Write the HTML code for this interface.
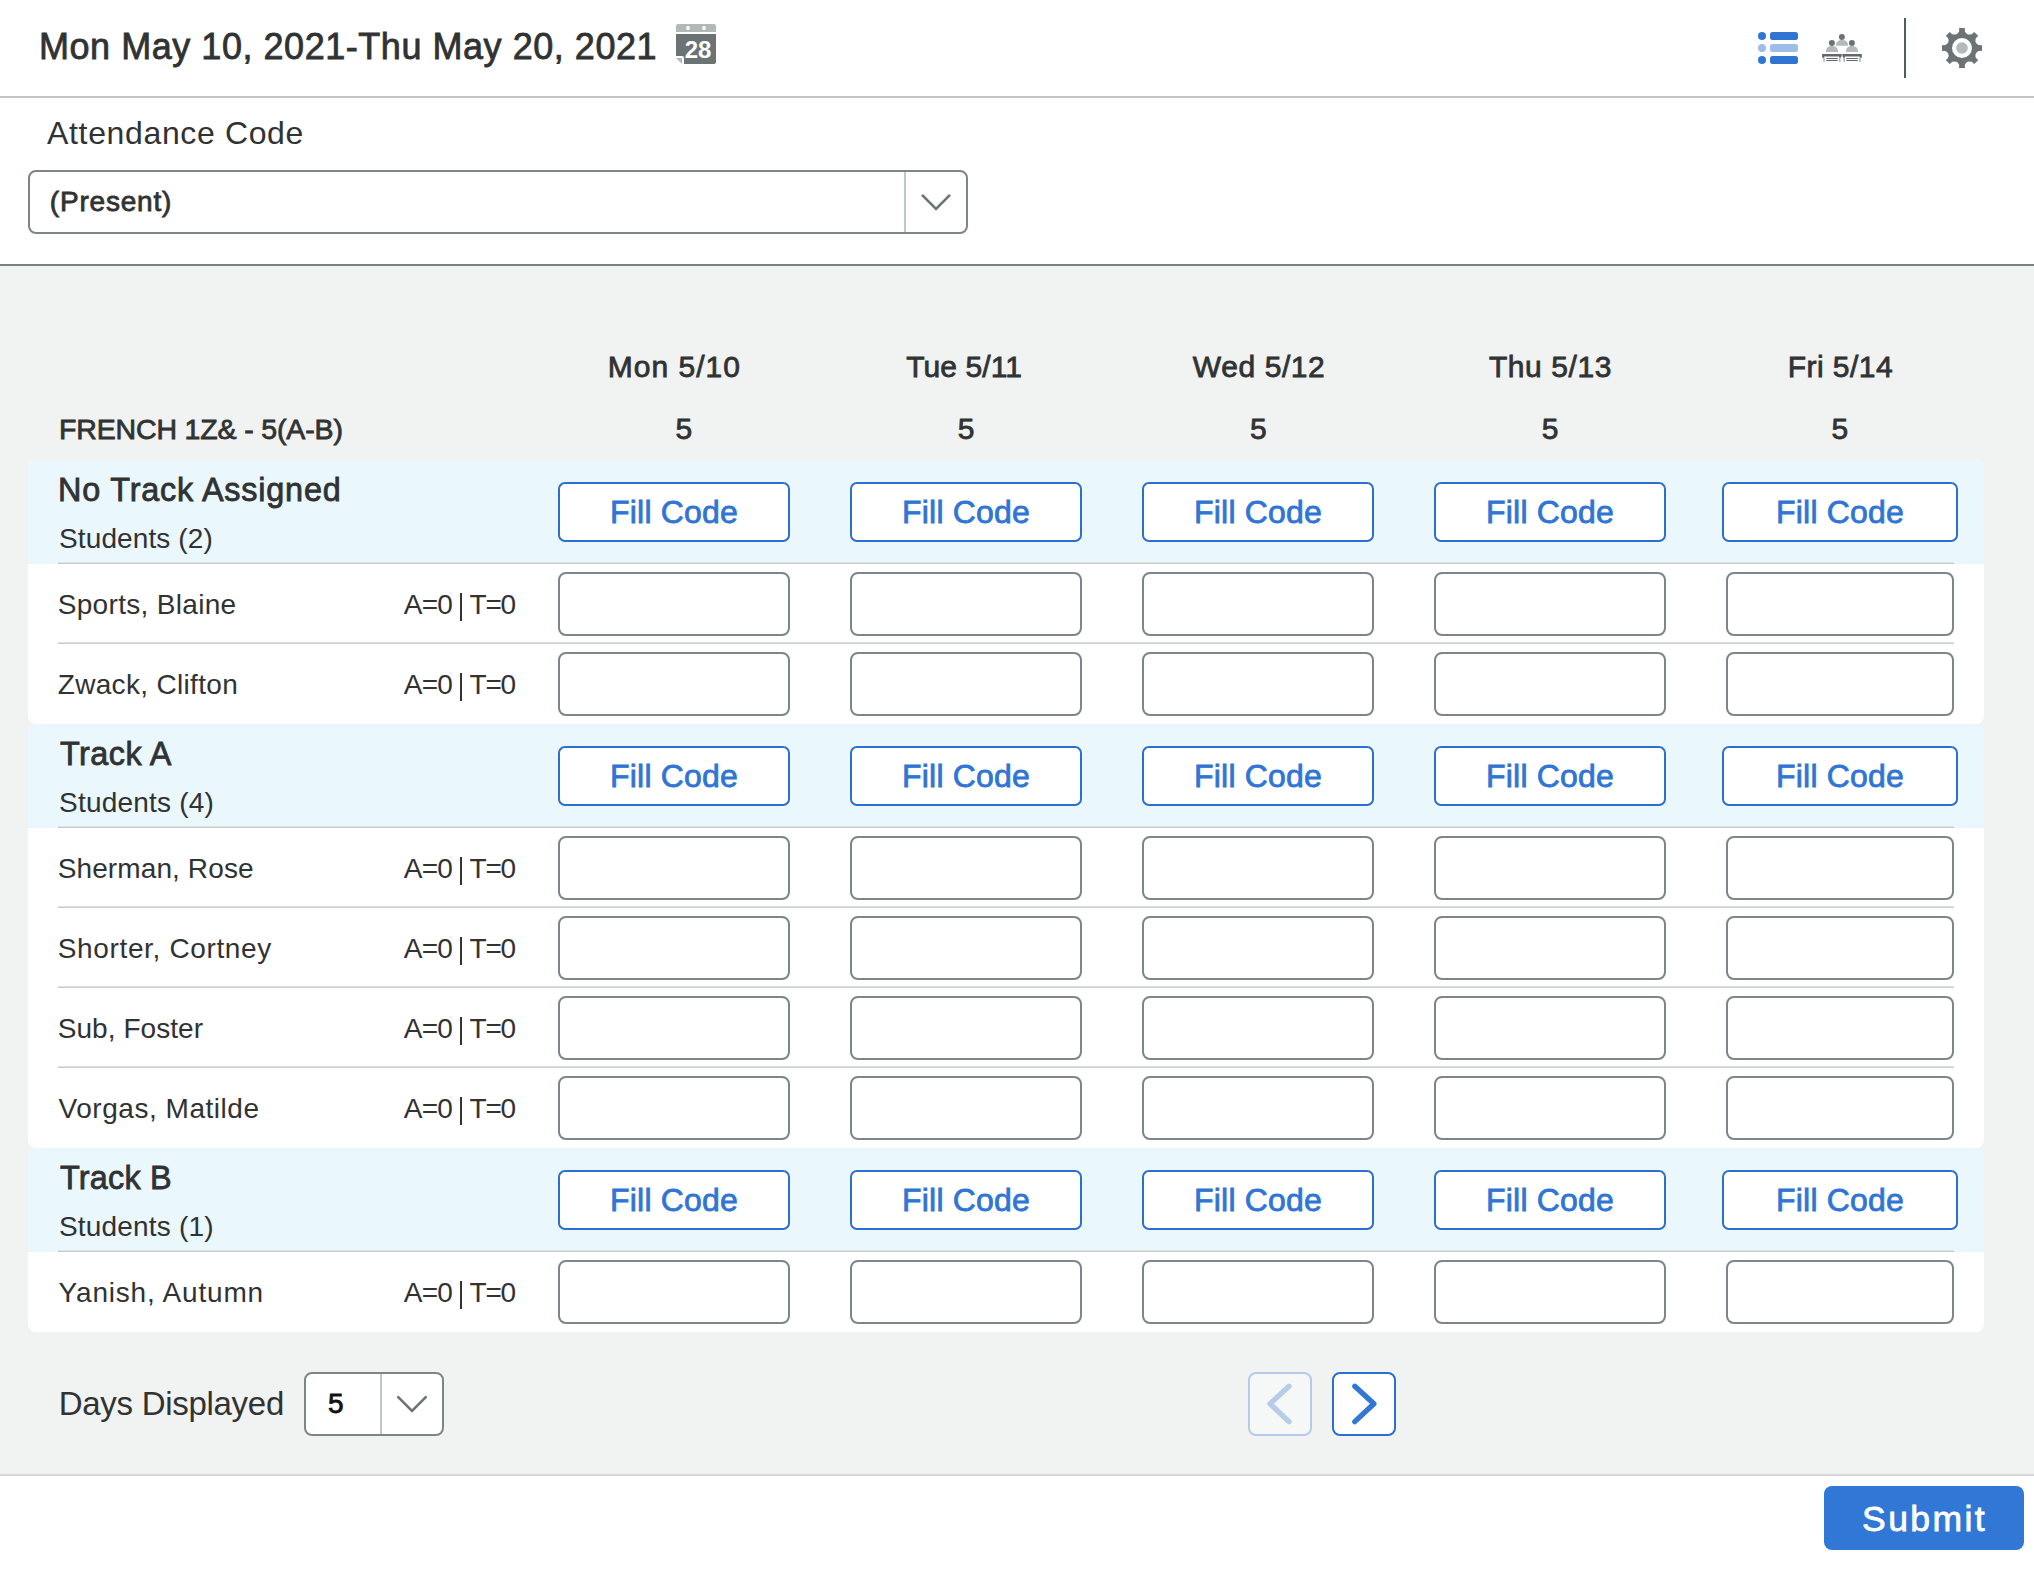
<!DOCTYPE html>
<html><head><meta charset="utf-8"><title>Attendance</title>
<style>
html,body{margin:0;padding:0;width:2034px;height:1570px;overflow:hidden;background:#fff;position:relative;font-family:"Liberation Sans", sans-serif;}
.t{position:absolute;white-space:pre;line-height:1;font-family:"Liberation Sans", sans-serif;}
</style></head><body>
<div style="position:absolute;left:0px;top:96px;width:2034px;height:2px;background:#c3c7c8"></div>
<div style="position:absolute;left:0px;top:264px;width:2034px;height:2px;background:#7a8285"></div>
<div style="position:absolute;left:0px;top:266px;width:2034px;height:1208px;background:#f1f2f2"></div>
<div style="position:absolute;left:0px;top:1474px;width:2034px;height:2px;background:#d6d9d9"></div>
<div class="t" style="left:39.00px;top:28.72px;font-size:36px;font-weight:400;color:#303233;letter-spacing:0.537px;-webkit-text-stroke:0.8px #303233;">Mon May 10, 2021-Thu May 20, 2021</div>
<svg style="position:absolute;left:676px;top:24px" width="40" height="40" viewBox="0 0 40 40">
<path d="M0,2 Q0,0 2,0 H38 Q40,0 40,2 V8 H0 Z" fill="#b3b9b9"/>
<circle cx="12" cy="4" r="1.9" fill="#fff"/><circle cx="28" cy="4" r="1.9" fill="#fff"/>
<path d="M0,10 H40 V38 Q40,40 38,40 H8 V34 Q8,32 6,32 H0 Z" fill="#6b7375"/>
<path d="M0,34 H6 V40 Z" fill="#b3b9b9"/>
<text x="22" y="33.5" font-family="Liberation Sans" font-weight="700" font-size="24" fill="#fff" text-anchor="middle">28</text>
</svg>
<svg style="position:absolute;left:1758px;top:32px" width="40" height="32" viewBox="0 0 40 32">
<circle cx="4" cy="4" r="4" fill="#3075d4"/><rect x="12" y="0" width="28" height="8" rx="2.5" fill="#3075d4"/>
<circle cx="4" cy="16" r="4" fill="#9dbce9"/><rect x="12" y="12" width="28" height="8" rx="2.5" fill="#9dbce9"/>
<circle cx="4" cy="28" r="4" fill="#3075d4"/><rect x="12" y="24" width="28" height="8" rx="2.5" fill="#3075d4"/>
</svg>
<svg style="position:absolute;left:1820px;top:30px" width="44" height="34" viewBox="0 0 44 34">
<circle cx="21.9" cy="7" r="3" fill="#6b7375"/>
<path d="M16,15.8 C16,11.5 18.5,10 22,10 C25.5,10 28,11.5 28,15.8 Z" fill="#b4b9b9"/>
<circle cx="11.9" cy="12.9" r="3" fill="#6b7375"/>
<path d="M6,21.9 C6,17.5 8.5,16 12,16 C15.5,16 18,17.5 18,21.9 Z" fill="#b4b9b9"/>
<circle cx="31.9" cy="12.9" r="3" fill="#6b7375"/>
<path d="M26,21.9 C26,17.5 28.5,16 32,16 C35.5,16 38,17.5 38,21.9 Z" fill="#b4b9b9"/>
<path d="M2.1,24 H21 V27.8 H19.2 V26.4 H4.1 V27.8 H2.1 Z" fill="#5f686a"/>
<path d="M22.8,24 H41.8 V27.8 H39.8 V26.4 H24.8 V27.8 H22.8 Z" fill="#5f686a"/>
<rect x="21" y="24" width="1.8" height="2.4" fill="#8d9496"/>
<g fill="#a9afb0"><rect x="3.3" y="27.8" width="1.5" height="4"/><rect x="19" y="27.8" width="1.5" height="4"/><rect x="23.5" y="27.8" width="1.5" height="4"/><rect x="39.2" y="27.8" width="1.5" height="4"/></g>
<g fill="#5f686a"><rect x="6.1" y="27.9" width="11.7" height="1.1" rx="0.5"/><rect x="6.1" y="30" width="11.7" height="1.1" rx="0.5"/>
<rect x="26.1" y="27.9" width="11.8" height="1.1" rx="0.5"/><rect x="26.1" y="30" width="11.8" height="1.1" rx="0.5"/></g>
</svg>
<div style="position:absolute;left:1904px;top:18px;width:2px;height:60px;background:#555b5d"></div>
<svg style="position:absolute;left:1938px;top:24px" width="48" height="48" viewBox="-24 -24 48 48">
<defs><mask id="gm"><rect x="-24" y="-24" width="48" height="48" fill="#fff"/><g fill="#000"><circle cx="0" cy="-19.6" r="4.7" transform="rotate(22.5)"/><circle cx="0" cy="-19.6" r="4.7" transform="rotate(67.5)"/><circle cx="0" cy="-19.6" r="4.7" transform="rotate(112.5)"/><circle cx="0" cy="-19.6" r="4.7" transform="rotate(157.5)"/><circle cx="0" cy="-19.6" r="4.7" transform="rotate(202.5)"/><circle cx="0" cy="-19.6" r="4.7" transform="rotate(247.5)"/><circle cx="0" cy="-19.6" r="4.7" transform="rotate(292.5)"/><circle cx="0" cy="-19.6" r="4.7" transform="rotate(337.5)"/></g><circle r="10" fill="#000"/></mask></defs>
<g mask="url(#gm)" fill="#6b7375"><circle r="16.5"/><rect x="-3" y="-20" width="6" height="10" rx="0.6" transform="rotate(0)"/><rect x="-3" y="-20" width="6" height="10" rx="0.6" transform="rotate(45)"/><rect x="-3" y="-20" width="6" height="10" rx="0.6" transform="rotate(90)"/><rect x="-3" y="-20" width="6" height="10" rx="0.6" transform="rotate(135)"/><rect x="-3" y="-20" width="6" height="10" rx="0.6" transform="rotate(180)"/><rect x="-3" y="-20" width="6" height="10" rx="0.6" transform="rotate(225)"/><rect x="-3" y="-20" width="6" height="10" rx="0.6" transform="rotate(270)"/><rect x="-3" y="-20" width="6" height="10" rx="0.6" transform="rotate(315)"/></g>
<circle r="5.8" fill="#b4b9b9"/>
</svg>
<div class="t" style="left:47.10px;top:116.91px;font-size:32px;font-weight:400;color:#303233;letter-spacing:0.640px;">Attendance Code</div>
<div style="position:absolute;left:28px;top:170px;width:936px;height:60px;border:2px solid #7d8588;border-radius:8px;background:#fff"></div>
<div style="position:absolute;left:904px;top:172px;width:2px;height:60px;background:#c1c6c7"></div>
<svg style="position:absolute;left:914px;top:186px" width="44" height="32" viewBox="0 0 44 32">
<polyline points="8,8.9 22,22.9 36,8.9" fill="none" stroke="#6b7375" stroke-width="2.6"/></svg>
<div class="t" style="left:49.82px;top:188.29px;font-size:28px;font-weight:400;color:#303233;letter-spacing:0.804px;-webkit-text-stroke:0.8px #303233;">(Present)</div>
<div class="t" style="left:273.86px;width:800px;text-align:center;text-indent:1.020px;top:351.90px;font-size:30px;font-weight:400;color:#303233;letter-spacing:1.020px;-webkit-text-stroke:0.8px #303233;">Mon 5/10</div>
<div class="t" style="left:564.09px;width:800px;text-align:center;text-indent:0.095px;top:351.90px;font-size:30px;font-weight:400;color:#303233;letter-spacing:0.095px;-webkit-text-stroke:0.8px #303233;">Tue 5/11</div>
<div class="t" style="left:858.83px;width:800px;text-align:center;text-indent:0.583px;top:351.90px;font-size:30px;font-weight:400;color:#303233;letter-spacing:0.583px;-webkit-text-stroke:0.8px #303233;">Wed 5/12</div>
<div class="t" style="left:1150.21px;width:800px;text-align:center;text-indent:0.580px;top:351.90px;font-size:30px;font-weight:400;color:#303233;letter-spacing:0.580px;-webkit-text-stroke:0.8px #303233;">Thu 5/13</div>
<div class="t" style="left:1440.15px;width:800px;text-align:center;text-indent:0.451px;top:351.90px;font-size:30px;font-weight:400;color:#303233;letter-spacing:0.451px;-webkit-text-stroke:0.8px #303233;">Fri 5/14</div>
<div class="t" style="left:283.74px;width:800px;text-align:center;text-indent:0.000px;top:413.90px;font-size:30px;font-weight:400;color:#303233;letter-spacing:0.000px;-webkit-text-stroke:0.8px #303233;">5</div>
<div class="t" style="left:566.12px;width:800px;text-align:center;text-indent:0.000px;top:413.90px;font-size:30px;font-weight:400;color:#303233;letter-spacing:0.000px;-webkit-text-stroke:0.8px #303233;">5</div>
<div class="t" style="left:858.38px;width:800px;text-align:center;text-indent:0.000px;top:413.90px;font-size:30px;font-weight:400;color:#303233;letter-spacing:0.000px;-webkit-text-stroke:0.8px #303233;">5</div>
<div class="t" style="left:1150.21px;width:800px;text-align:center;text-indent:0.000px;top:413.90px;font-size:30px;font-weight:400;color:#303233;letter-spacing:0.000px;-webkit-text-stroke:0.8px #303233;">5</div>
<div class="t" style="left:1439.74px;width:800px;text-align:center;text-indent:0.000px;top:413.90px;font-size:30px;font-weight:400;color:#303233;letter-spacing:0.000px;-webkit-text-stroke:0.8px #303233;">5</div>
<div class="t" style="left:59.00px;top:415.17px;font-size:28.5px;font-weight:400;color:#303233;letter-spacing:-0.150px;-webkit-text-stroke:0.8px #303233;">FRENCH 1Z&amp; - 5(A-B)</div>
<div style="position:absolute;left:28px;top:460px;width:1956px;height:264px;border-radius:8px;overflow:hidden;background:#fff"><div style="position:absolute;left:0;top:0;width:1956px;height:104px;background:#eaf7fd"></div></div>
<div class="t" style="left:58.10px;top:474.37px;font-size:32.4px;font-weight:400;color:#303233;letter-spacing:0.787px;-webkit-text-stroke:0.8px #303233;">No Track Assigned</div>
<div class="t" style="left:59.00px;top:525.29px;font-size:28px;font-weight:400;color:#303233;letter-spacing:0.118px;">Students (2)</div>
<div style="position:absolute;left:558px;top:482px;width:228px;height:56px;border:2px solid #2c6fd2;border-radius:7px;background:#fff"></div>
<div class="t" style="left:274.01px;width:800px;text-align:center;text-indent:0.195px;top:495.91px;font-size:32px;font-weight:400;color:#3075d4;letter-spacing:0.195px;-webkit-text-stroke:0.8px #3075d4;">Fill Code</div>
<div style="position:absolute;left:850px;top:482px;width:228px;height:56px;border:2px solid #2c6fd2;border-radius:7px;background:#fff"></div>
<div class="t" style="left:566.01px;width:800px;text-align:center;text-indent:0.195px;top:495.91px;font-size:32px;font-weight:400;color:#3075d4;letter-spacing:0.195px;-webkit-text-stroke:0.8px #3075d4;">Fill Code</div>
<div style="position:absolute;left:1142px;top:482px;width:228px;height:56px;border:2px solid #2c6fd2;border-radius:7px;background:#fff"></div>
<div class="t" style="left:858.01px;width:800px;text-align:center;text-indent:0.195px;top:495.91px;font-size:32px;font-weight:400;color:#3075d4;letter-spacing:0.195px;-webkit-text-stroke:0.8px #3075d4;">Fill Code</div>
<div style="position:absolute;left:1434px;top:482px;width:228px;height:56px;border:2px solid #2c6fd2;border-radius:7px;background:#fff"></div>
<div class="t" style="left:1150.01px;width:800px;text-align:center;text-indent:0.195px;top:495.91px;font-size:32px;font-weight:400;color:#3075d4;letter-spacing:0.195px;-webkit-text-stroke:0.8px #3075d4;">Fill Code</div>
<div style="position:absolute;left:1722px;top:482px;width:232px;height:56px;border:2px solid #2c6fd2;border-radius:7px;background:#fff"></div>
<div class="t" style="left:1440.01px;width:800px;text-align:center;text-indent:0.195px;top:495.91px;font-size:32px;font-weight:400;color:#3075d4;letter-spacing:0.195px;-webkit-text-stroke:0.8px #3075d4;">Fill Code</div>
<div style="position:absolute;left:58px;top:562px;width:1896px;height:2px;background:linear-gradient(#dde1e2 50%, #c9cdce 50%)"></div>
<div class="t" style="left:57.72px;top:591.09px;font-size:28px;font-weight:400;color:#303233;letter-spacing:0.319px;">Sports, Blaine</div>
<div class="t" style="left:403.82px;top:590.59px;font-size:28px;font-weight:400;color:#303233;letter-spacing:-0.760px;">A=0</div>
<div style="position:absolute;left:460.4px;top:592.8px;width:2px;height:27.8px;background:#303233"></div>
<div class="t" style="left:469.50px;top:590.59px;font-size:28px;font-weight:400;color:#303233;letter-spacing:-1.210px;">T=0</div>
<div style="position:absolute;left:558px;top:572px;width:228px;height:60px;border:2px solid #7d8588;border-radius:8px;background:#fff"></div>
<div style="position:absolute;left:850px;top:572px;width:228px;height:60px;border:2px solid #7d8588;border-radius:8px;background:#fff"></div>
<div style="position:absolute;left:1142px;top:572px;width:228px;height:60px;border:2px solid #7d8588;border-radius:8px;background:#fff"></div>
<div style="position:absolute;left:1434px;top:572px;width:228px;height:60px;border:2px solid #7d8588;border-radius:8px;background:#fff"></div>
<div style="position:absolute;left:1726px;top:572px;width:224px;height:60px;border:2px solid #7d8588;border-radius:8px;background:#fff"></div>
<div style="position:absolute;left:58px;top:642px;width:1896px;height:2px;background:linear-gradient(#dde1e2 50%, #c9cdce 50%)"></div>
<div class="t" style="left:57.72px;top:671.09px;font-size:28px;font-weight:400;color:#303233;letter-spacing:0.323px;">Zwack, Clifton</div>
<div class="t" style="left:403.82px;top:670.59px;font-size:28px;font-weight:400;color:#303233;letter-spacing:-0.760px;">A=0</div>
<div style="position:absolute;left:460.4px;top:672.8px;width:2px;height:27.8px;background:#303233"></div>
<div class="t" style="left:469.50px;top:670.59px;font-size:28px;font-weight:400;color:#303233;letter-spacing:-1.210px;">T=0</div>
<div style="position:absolute;left:558px;top:652px;width:228px;height:60px;border:2px solid #7d8588;border-radius:8px;background:#fff"></div>
<div style="position:absolute;left:850px;top:652px;width:228px;height:60px;border:2px solid #7d8588;border-radius:8px;background:#fff"></div>
<div style="position:absolute;left:1142px;top:652px;width:228px;height:60px;border:2px solid #7d8588;border-radius:8px;background:#fff"></div>
<div style="position:absolute;left:1434px;top:652px;width:228px;height:60px;border:2px solid #7d8588;border-radius:8px;background:#fff"></div>
<div style="position:absolute;left:1726px;top:652px;width:224px;height:60px;border:2px solid #7d8588;border-radius:8px;background:#fff"></div>
<div style="position:absolute;left:28px;top:724px;width:1956px;height:424px;border-radius:8px;overflow:hidden;background:#fff"><div style="position:absolute;left:0;top:0;width:1956px;height:104px;background:#eaf7fd"></div></div>
<div class="t" style="left:59.90px;top:738.37px;font-size:32.4px;font-weight:400;color:#303233;letter-spacing:0.480px;-webkit-text-stroke:0.8px #303233;">Track A</div>
<div class="t" style="left:59.00px;top:789.29px;font-size:28px;font-weight:400;color:#303233;letter-spacing:0.210px;">Students (4)</div>
<div style="position:absolute;left:558px;top:746px;width:228px;height:56px;border:2px solid #2c6fd2;border-radius:7px;background:#fff"></div>
<div class="t" style="left:274.01px;width:800px;text-align:center;text-indent:0.195px;top:759.91px;font-size:32px;font-weight:400;color:#3075d4;letter-spacing:0.195px;-webkit-text-stroke:0.8px #3075d4;">Fill Code</div>
<div style="position:absolute;left:850px;top:746px;width:228px;height:56px;border:2px solid #2c6fd2;border-radius:7px;background:#fff"></div>
<div class="t" style="left:566.01px;width:800px;text-align:center;text-indent:0.195px;top:759.91px;font-size:32px;font-weight:400;color:#3075d4;letter-spacing:0.195px;-webkit-text-stroke:0.8px #3075d4;">Fill Code</div>
<div style="position:absolute;left:1142px;top:746px;width:228px;height:56px;border:2px solid #2c6fd2;border-radius:7px;background:#fff"></div>
<div class="t" style="left:858.01px;width:800px;text-align:center;text-indent:0.195px;top:759.91px;font-size:32px;font-weight:400;color:#3075d4;letter-spacing:0.195px;-webkit-text-stroke:0.8px #3075d4;">Fill Code</div>
<div style="position:absolute;left:1434px;top:746px;width:228px;height:56px;border:2px solid #2c6fd2;border-radius:7px;background:#fff"></div>
<div class="t" style="left:1150.01px;width:800px;text-align:center;text-indent:0.195px;top:759.91px;font-size:32px;font-weight:400;color:#3075d4;letter-spacing:0.195px;-webkit-text-stroke:0.8px #3075d4;">Fill Code</div>
<div style="position:absolute;left:1722px;top:746px;width:232px;height:56px;border:2px solid #2c6fd2;border-radius:7px;background:#fff"></div>
<div class="t" style="left:1440.01px;width:800px;text-align:center;text-indent:0.195px;top:759.91px;font-size:32px;font-weight:400;color:#3075d4;letter-spacing:0.195px;-webkit-text-stroke:0.8px #3075d4;">Fill Code</div>
<div style="position:absolute;left:58px;top:826px;width:1896px;height:2px;background:linear-gradient(#dde1e2 50%, #c9cdce 50%)"></div>
<div class="t" style="left:57.72px;top:855.09px;font-size:28px;font-weight:400;color:#303233;letter-spacing:0.109px;">Sherman, Rose</div>
<div class="t" style="left:403.82px;top:854.59px;font-size:28px;font-weight:400;color:#303233;letter-spacing:-0.760px;">A=0</div>
<div style="position:absolute;left:460.4px;top:856.8px;width:2px;height:27.8px;background:#303233"></div>
<div class="t" style="left:469.50px;top:854.59px;font-size:28px;font-weight:400;color:#303233;letter-spacing:-1.210px;">T=0</div>
<div style="position:absolute;left:558px;top:836px;width:228px;height:60px;border:2px solid #7d8588;border-radius:8px;background:#fff"></div>
<div style="position:absolute;left:850px;top:836px;width:228px;height:60px;border:2px solid #7d8588;border-radius:8px;background:#fff"></div>
<div style="position:absolute;left:1142px;top:836px;width:228px;height:60px;border:2px solid #7d8588;border-radius:8px;background:#fff"></div>
<div style="position:absolute;left:1434px;top:836px;width:228px;height:60px;border:2px solid #7d8588;border-radius:8px;background:#fff"></div>
<div style="position:absolute;left:1726px;top:836px;width:224px;height:60px;border:2px solid #7d8588;border-radius:8px;background:#fff"></div>
<div style="position:absolute;left:58px;top:906px;width:1896px;height:2px;background:linear-gradient(#dde1e2 50%, #c9cdce 50%)"></div>
<div class="t" style="left:57.72px;top:935.09px;font-size:28px;font-weight:400;color:#303233;letter-spacing:0.648px;">Shorter, Cortney</div>
<div class="t" style="left:403.82px;top:934.59px;font-size:28px;font-weight:400;color:#303233;letter-spacing:-0.760px;">A=0</div>
<div style="position:absolute;left:460.4px;top:936.8px;width:2px;height:27.8px;background:#303233"></div>
<div class="t" style="left:469.50px;top:934.59px;font-size:28px;font-weight:400;color:#303233;letter-spacing:-1.210px;">T=0</div>
<div style="position:absolute;left:558px;top:916px;width:228px;height:60px;border:2px solid #7d8588;border-radius:8px;background:#fff"></div>
<div style="position:absolute;left:850px;top:916px;width:228px;height:60px;border:2px solid #7d8588;border-radius:8px;background:#fff"></div>
<div style="position:absolute;left:1142px;top:916px;width:228px;height:60px;border:2px solid #7d8588;border-radius:8px;background:#fff"></div>
<div style="position:absolute;left:1434px;top:916px;width:228px;height:60px;border:2px solid #7d8588;border-radius:8px;background:#fff"></div>
<div style="position:absolute;left:1726px;top:916px;width:224px;height:60px;border:2px solid #7d8588;border-radius:8px;background:#fff"></div>
<div style="position:absolute;left:58px;top:986px;width:1896px;height:2px;background:linear-gradient(#dde1e2 50%, #c9cdce 50%)"></div>
<div class="t" style="left:57.72px;top:1015.09px;font-size:28px;font-weight:400;color:#303233;letter-spacing:0.056px;">Sub, Foster</div>
<div class="t" style="left:403.82px;top:1014.59px;font-size:28px;font-weight:400;color:#303233;letter-spacing:-0.760px;">A=0</div>
<div style="position:absolute;left:460.4px;top:1016.8px;width:2px;height:27.8px;background:#303233"></div>
<div class="t" style="left:469.50px;top:1014.59px;font-size:28px;font-weight:400;color:#303233;letter-spacing:-1.210px;">T=0</div>
<div style="position:absolute;left:558px;top:996px;width:228px;height:60px;border:2px solid #7d8588;border-radius:8px;background:#fff"></div>
<div style="position:absolute;left:850px;top:996px;width:228px;height:60px;border:2px solid #7d8588;border-radius:8px;background:#fff"></div>
<div style="position:absolute;left:1142px;top:996px;width:228px;height:60px;border:2px solid #7d8588;border-radius:8px;background:#fff"></div>
<div style="position:absolute;left:1434px;top:996px;width:228px;height:60px;border:2px solid #7d8588;border-radius:8px;background:#fff"></div>
<div style="position:absolute;left:1726px;top:996px;width:224px;height:60px;border:2px solid #7d8588;border-radius:8px;background:#fff"></div>
<div style="position:absolute;left:58px;top:1066px;width:1896px;height:2px;background:linear-gradient(#dde1e2 50%, #c9cdce 50%)"></div>
<div class="t" style="left:58.62px;top:1095.09px;font-size:28px;font-weight:400;color:#303233;letter-spacing:0.525px;">Vorgas, Matilde</div>
<div class="t" style="left:403.82px;top:1094.59px;font-size:28px;font-weight:400;color:#303233;letter-spacing:-0.760px;">A=0</div>
<div style="position:absolute;left:460.4px;top:1096.8px;width:2px;height:27.8px;background:#303233"></div>
<div class="t" style="left:469.50px;top:1094.59px;font-size:28px;font-weight:400;color:#303233;letter-spacing:-1.210px;">T=0</div>
<div style="position:absolute;left:558px;top:1076px;width:228px;height:60px;border:2px solid #7d8588;border-radius:8px;background:#fff"></div>
<div style="position:absolute;left:850px;top:1076px;width:228px;height:60px;border:2px solid #7d8588;border-radius:8px;background:#fff"></div>
<div style="position:absolute;left:1142px;top:1076px;width:228px;height:60px;border:2px solid #7d8588;border-radius:8px;background:#fff"></div>
<div style="position:absolute;left:1434px;top:1076px;width:228px;height:60px;border:2px solid #7d8588;border-radius:8px;background:#fff"></div>
<div style="position:absolute;left:1726px;top:1076px;width:224px;height:60px;border:2px solid #7d8588;border-radius:8px;background:#fff"></div>
<div style="position:absolute;left:28px;top:1148px;width:1956px;height:184px;border-radius:8px;overflow:hidden;background:#fff"><div style="position:absolute;left:0;top:0;width:1956px;height:104px;background:#eaf7fd"></div></div>
<div class="t" style="left:59.90px;top:1162.37px;font-size:32.4px;font-weight:400;color:#303233;letter-spacing:0.240px;-webkit-text-stroke:0.8px #303233;">Track B</div>
<div class="t" style="left:59.00px;top:1213.29px;font-size:28px;font-weight:400;color:#303233;letter-spacing:0.187px;">Students (1)</div>
<div style="position:absolute;left:558px;top:1170px;width:228px;height:56px;border:2px solid #2c6fd2;border-radius:7px;background:#fff"></div>
<div class="t" style="left:274.01px;width:800px;text-align:center;text-indent:0.195px;top:1183.91px;font-size:32px;font-weight:400;color:#3075d4;letter-spacing:0.195px;-webkit-text-stroke:0.8px #3075d4;">Fill Code</div>
<div style="position:absolute;left:850px;top:1170px;width:228px;height:56px;border:2px solid #2c6fd2;border-radius:7px;background:#fff"></div>
<div class="t" style="left:566.01px;width:800px;text-align:center;text-indent:0.195px;top:1183.91px;font-size:32px;font-weight:400;color:#3075d4;letter-spacing:0.195px;-webkit-text-stroke:0.8px #3075d4;">Fill Code</div>
<div style="position:absolute;left:1142px;top:1170px;width:228px;height:56px;border:2px solid #2c6fd2;border-radius:7px;background:#fff"></div>
<div class="t" style="left:858.01px;width:800px;text-align:center;text-indent:0.195px;top:1183.91px;font-size:32px;font-weight:400;color:#3075d4;letter-spacing:0.195px;-webkit-text-stroke:0.8px #3075d4;">Fill Code</div>
<div style="position:absolute;left:1434px;top:1170px;width:228px;height:56px;border:2px solid #2c6fd2;border-radius:7px;background:#fff"></div>
<div class="t" style="left:1150.01px;width:800px;text-align:center;text-indent:0.195px;top:1183.91px;font-size:32px;font-weight:400;color:#3075d4;letter-spacing:0.195px;-webkit-text-stroke:0.8px #3075d4;">Fill Code</div>
<div style="position:absolute;left:1722px;top:1170px;width:232px;height:56px;border:2px solid #2c6fd2;border-radius:7px;background:#fff"></div>
<div class="t" style="left:1440.01px;width:800px;text-align:center;text-indent:0.195px;top:1183.91px;font-size:32px;font-weight:400;color:#3075d4;letter-spacing:0.195px;-webkit-text-stroke:0.8px #3075d4;">Fill Code</div>
<div style="position:absolute;left:58px;top:1250px;width:1896px;height:2px;background:linear-gradient(#dde1e2 50%, #c9cdce 50%)"></div>
<div class="t" style="left:58.62px;top:1279.09px;font-size:28px;font-weight:400;color:#303233;letter-spacing:0.803px;">Yanish, Autumn</div>
<div class="t" style="left:403.82px;top:1278.59px;font-size:28px;font-weight:400;color:#303233;letter-spacing:-0.760px;">A=0</div>
<div style="position:absolute;left:460.4px;top:1280.8px;width:2px;height:27.8px;background:#303233"></div>
<div class="t" style="left:469.50px;top:1278.59px;font-size:28px;font-weight:400;color:#303233;letter-spacing:-1.210px;">T=0</div>
<div style="position:absolute;left:558px;top:1260px;width:228px;height:60px;border:2px solid #7d8588;border-radius:8px;background:#fff"></div>
<div style="position:absolute;left:850px;top:1260px;width:228px;height:60px;border:2px solid #7d8588;border-radius:8px;background:#fff"></div>
<div style="position:absolute;left:1142px;top:1260px;width:228px;height:60px;border:2px solid #7d8588;border-radius:8px;background:#fff"></div>
<div style="position:absolute;left:1434px;top:1260px;width:228px;height:60px;border:2px solid #7d8588;border-radius:8px;background:#fff"></div>
<div style="position:absolute;left:1726px;top:1260px;width:224px;height:60px;border:2px solid #7d8588;border-radius:8px;background:#fff"></div>
<div class="t" style="left:58.74px;top:1386.66px;font-size:33px;font-weight:400;color:#303233;letter-spacing:-0.289px;">Days Displayed</div>
<div style="position:absolute;left:304px;top:1372px;width:136px;height:60px;border:2px solid #7d8588;border-radius:8px;background:#fff"></div>
<div style="position:absolute;left:380px;top:1374px;width:2px;height:60px;background:#c1c6c7"></div>
<svg style="position:absolute;left:390px;top:1386px" width="44" height="32" viewBox="0 0 44 32">
<polyline points="7.5,10.3 22,24.8 36.5,10.3" fill="none" stroke="#6b7375" stroke-width="2.6"/></svg>
<div class="t" style="left:327.90px;top:1390.09px;font-size:28px;font-weight:400;color:#111;letter-spacing:0.000px;-webkit-text-stroke:0.8px #111;">5</div>
<div style="position:absolute;left:1248px;top:1372px;width:60px;height:60px;border:2px solid #b5cbe9;border-radius:8px;background:#f6f7f7"></div>
<svg style="position:absolute;left:1248px;top:1372px" width="64" height="64" viewBox="0 0 64 64">
<polyline points="41,14.3 22,31.8 41,49.6" fill="none" stroke="#b6cce9" stroke-width="5.3" stroke-linecap="round" stroke-linejoin="round"/></svg>
<div style="position:absolute;left:1332px;top:1372px;width:60px;height:60px;border:2px solid #2c6fd2;border-radius:8px;background:#fff"></div>
<svg style="position:absolute;left:1332px;top:1372px" width="64" height="64" viewBox="0 0 64 64">
<polyline points="22.8,14.3 41.9,31.8 22.8,49.6" fill="none" stroke="#3077d6" stroke-width="5.3" stroke-linecap="round" stroke-linejoin="round"/></svg>
<div style="position:absolute;left:1824px;top:1486px;width:200px;height:64px;background:#3177d6;border-radius:8px"></div>
<div class="t" style="left:1523.41px;width:800px;text-align:center;text-indent:2.420px;top:1501.94px;font-size:35.5px;font-weight:400;color:#fff;letter-spacing:2.420px;-webkit-text-stroke:0.8px #fff;">Submit</div>
</body></html>
